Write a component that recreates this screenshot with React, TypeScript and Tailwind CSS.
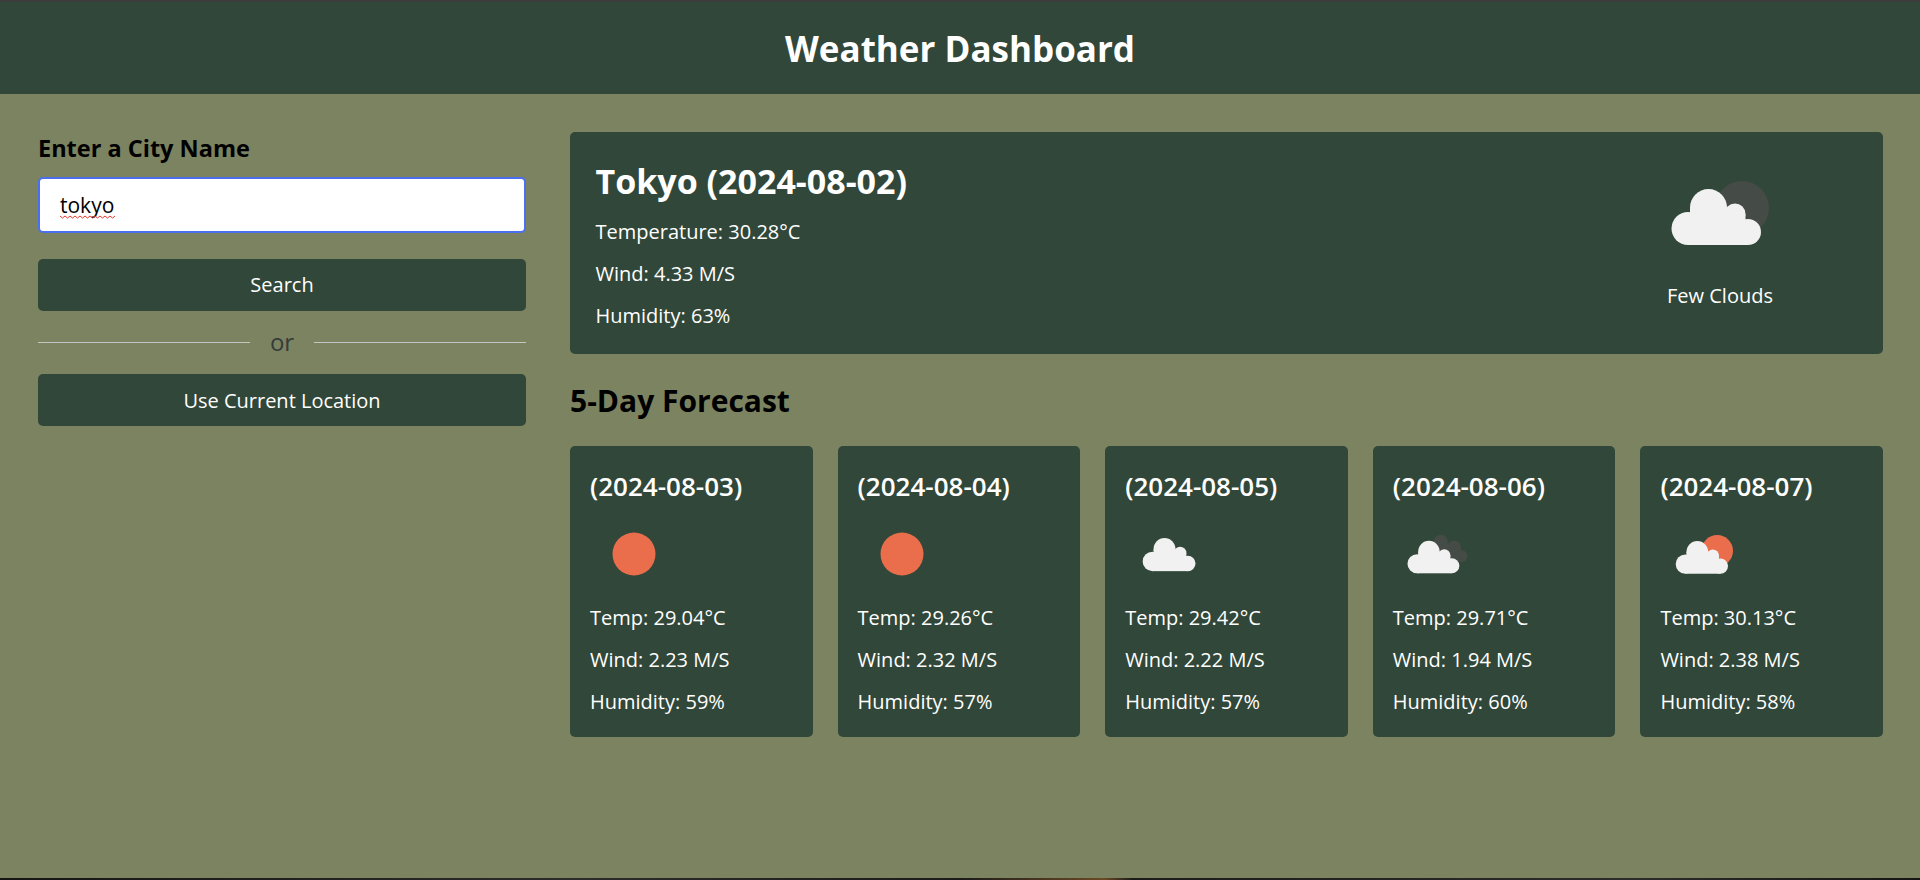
const font = { fontFamily: '"Open Sans", sans-serif' };

const Cloud = () => (
  <g fill="#f1f1f1">
    <circle cx="18" cy="68.5" r="16.5" />
    <circle cx="38.5" cy="47.5" r="18.5" />
    <circle cx="65" cy="54" r="10.5" />
    <circle cx="78" cy="72" r="13" />
    <rect x="20" y="47.5" width="37" height="30" />
    <rect x="50" y="54" width="25.5" height="20" />
    <rect x="18" y="60" width="60" height="25" />
  </g>
);

const MainIcon = () => (
  <svg width="100" height="100" viewBox="0 0 100 100">
    <circle cx="72" cy="48" r="27" fill="#454b46" />
    <Cloud />
  </svg>
);

const icons: Record<string, React.ReactNode> = {
  sun: <circle cx="44" cy="32" r="21.5" fill="#ea6e4b" />,
  cloud: (
    <g transform="translate(16.8 -1) scale(0.59)">
      <Cloud />
    </g>
  ),
  dark: (
    <>
      <g fill="#454b46">
        <circle cx="47.8" cy="19.7" r="7" />
        <circle cx="61" cy="25.7" r="7" />
        <circle cx="68.5" cy="34" r="6" />
        <rect x="44" y="22" width="20" height="16" />
      </g>
      <g transform="translate(13.6 2) scale(0.58)">
        <Cloud />
      </g>
    </>
  ),
  few: (
    <>
      <circle cx="57.2" cy="28.8" r="15.8" fill="#ea6e4b" />
      <g transform="translate(14.8 2) scale(0.585)">
        <Cloud />
      </g>
    </>
  ),
};

const days = [
  { date: '(2024-08-03)', icon: 'sun', temp: '29.04', wind: '2.23', hum: '59' },
  { date: '(2024-08-04)', icon: 'sun', temp: '29.26', wind: '2.32', hum: '57' },
  { date: '(2024-08-05)', icon: 'cloud', temp: '29.42', wind: '2.22', hum: '57' },
  { date: '(2024-08-06)', icon: 'dark', temp: '29.71', wind: '1.94', hum: '60' },
  { date: '(2024-08-07)', icon: 'few', temp: '30.13', wind: '2.38', hum: '58' },
];

const App = () => {
  return (
    <div className="flex h-[880px] flex-col bg-[#7c8361] overflow-hidden" style={font}>
      <div className="h-[2px] bg-[#3c3c3c]"></div>
      <header className="h-[92px] pt-[2px] flex items-center justify-center bg-[#314739]">
        <h1 className="text-[35px] font-bold text-white">Weather Dashboard</h1>
      </header>
      <main className="flex flex-1 gap-[44px] pl-[38px] pr-[37px] pt-[38px]">
        <div className="w-[488px] shrink-0">
          <h3 className="text-[23.5px] font-bold leading-[32px] text-black">Enter a City Name</h3>
          <div className="relative mt-[13px]">
            <input
              defaultValue="tokyo"
              spellCheck={false}
              className="h-[56px] w-full rounded-[5px] border-2 border-[#4c6ef0] bg-white px-[20px] text-[21px] text-black outline-none"
            />
            <svg width="56" height="4" viewBox="0 0 56 4" className="absolute left-[22px] top-[38px]">
              <path
                d="M0 1 L2.5 3 L5 1 L7.5 3 L10 1 L12.5 3 L15 1 L17.5 3 L20 1 L22.5 3 L25 1 L27.5 3 L30 1 L32.5 3 L35 1 L37.5 3 L40 1 L42.5 3 L45 1 L47.5 3 L50 1 L52.5 3 L55 1"
                fill="none"
                stroke="#e5392f"
                strokeWidth="1"
              />
            </svg>
          </div>
          <button className="mt-[26px] h-[52px] w-full rounded-[5px] bg-[#314739] text-[20px] font-medium text-white">
            Search
          </button>
          <div className="mt-[10px] mb-[11px] flex h-[42px] items-center gap-[20px] text-[24px] text-[#343c3c]">
            <div className="h-px flex-1 bg-[#c4c4c4]"></div>
            <span>or</span>
            <div className="h-px flex-1 bg-[#c4c4c4]"></div>
          </div>
          <button className="h-[52px] w-full rounded-[5px] bg-[#314739] pt-[2px] text-[20px] font-medium text-white">
            Use Current Location
          </button>
        </div>
        <div className="flex-1">
          <div className="flex h-[222px] justify-between rounded-[5px] bg-[#314739] pl-[25.5px] pr-[113px] text-white">
            <div className="mt-[27px]">
              <h2 className="text-[34px] font-bold leading-[44px]">Tokyo (2024-08-02)</h2>
              <p className="mt-[16px] text-[20px] font-medium leading-[26px]">Temperature: 30.28°C</p>
              <p className="mt-[16px] text-[20px] font-medium leading-[26px]">Wind: 4.33 M/S</p>
              <p className="mt-[16px] text-[20px] font-medium leading-[26px]">Humidity: 63%</p>
            </div>
            <div className="mt-[28px] flex w-[100px] flex-col items-center">
              <MainIcon />
              <span className="mt-[21px] whitespace-nowrap text-[20px] font-medium">Few Clouds</span>
            </div>
          </div>
          <h2 className="mt-[27px] text-[30px] font-bold leading-[40px] text-black">5-Day Forecast</h2>
          <div className="mt-[25px] grid grid-cols-5 gap-[25px]">
            {days.map((d) => (
              <div key={d.date} className="h-[291px] rounded-[5px] bg-[#314739] px-[20px] pt-[23px] text-white">
                <h3 className="text-[26px] font-semibold leading-[34px]">{d.date}</h3>
                <svg width="88" height="64" viewBox="0 0 88 64" className="mt-[19px]">
                  {icons[d.icon]}
                </svg>
                <p className="mt-[19px] text-[20px] font-medium leading-[26px]">Temp: {d.temp}°C</p>
                <p className="mt-[16px] text-[20px] font-medium leading-[26px]">Wind: {d.wind} M/S</p>
                <p className="mt-[16px] text-[20px] font-medium leading-[26px]">Humidity: {d.hum}%</p>
              </div>
            ))}
          </div>
        </div>
      </main>
      <div className="h-[2px] bg-[linear-gradient(90deg,#161614_0%,#2c2c2a_30%,#1c1c1a_50%,#6b4a25_57.5%,#1c1c1a_59%,#2c2c2a_85%,#161614_100%)]"></div>
    </div>
  );
};

export default App;
